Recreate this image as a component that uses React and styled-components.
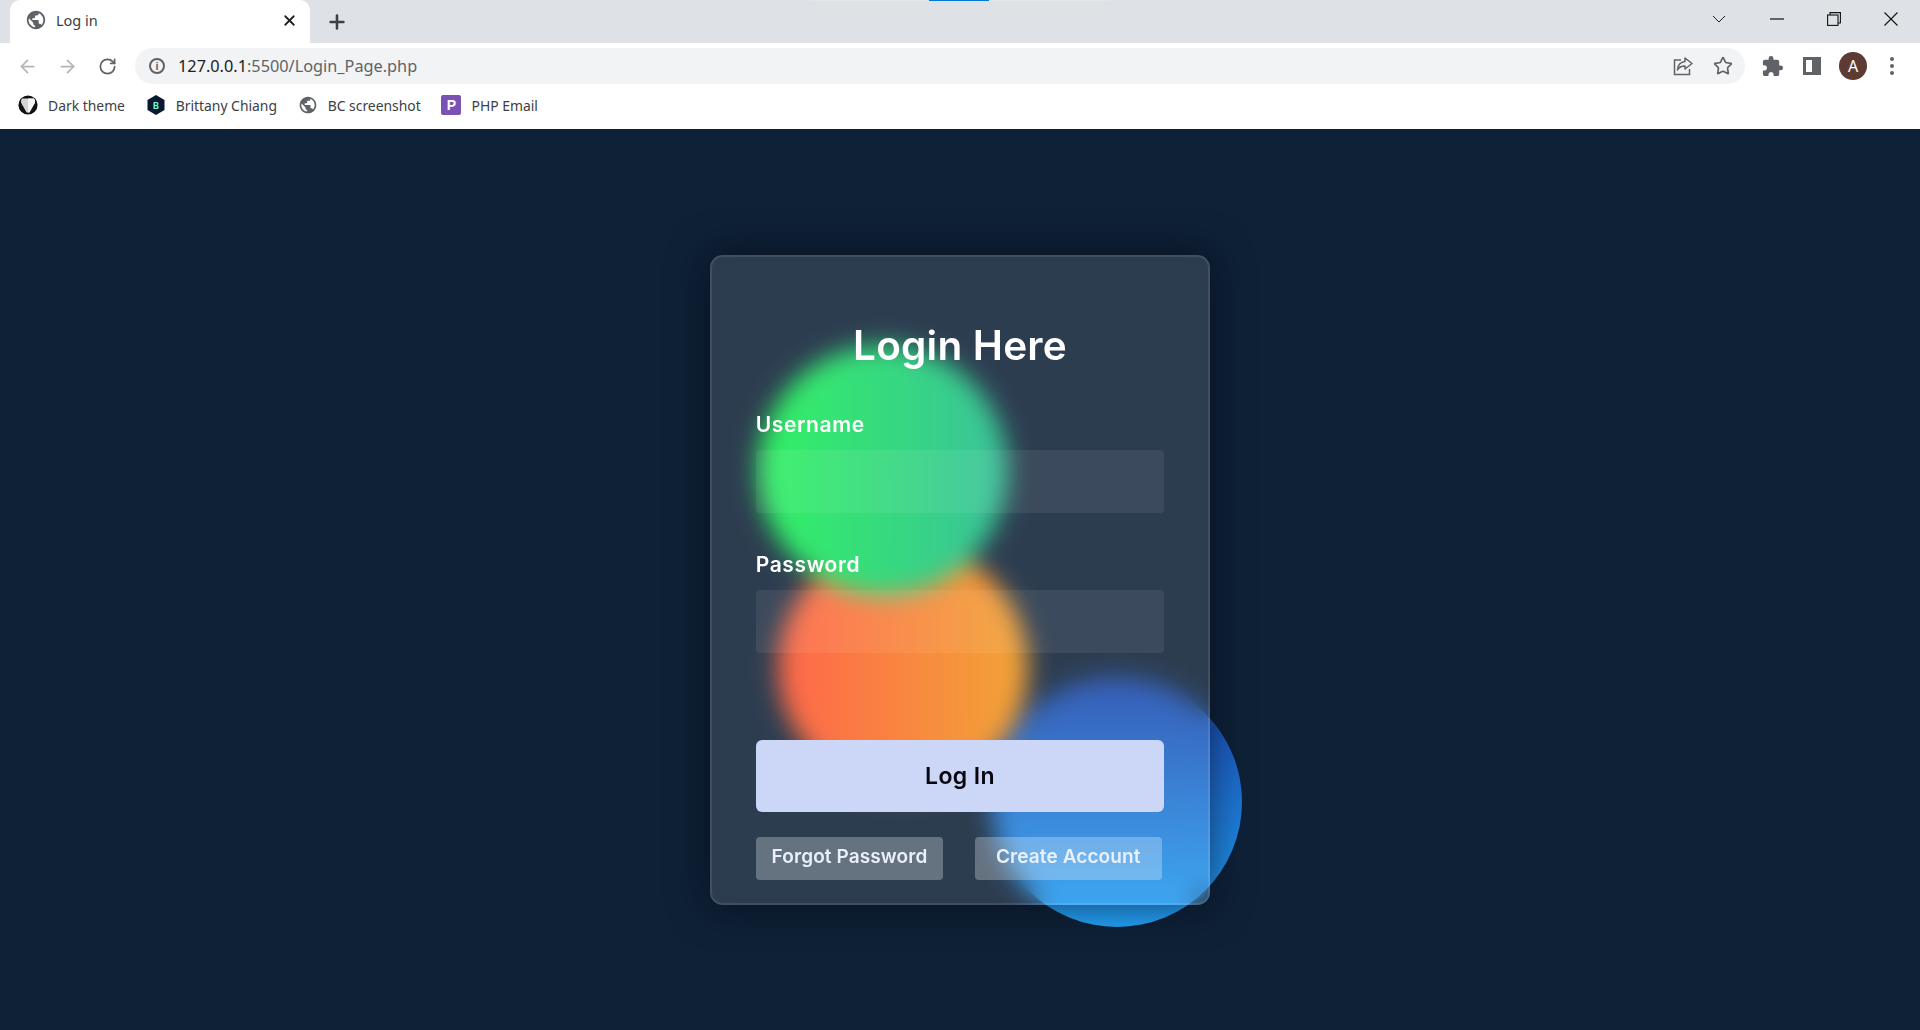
import React from "react";
import styled, { createGlobalStyle } from "styled-components";
import { MdPublic, MdExtension } from "react-icons/md";
import { ArrowLeft, ArrowRight, RotateCw, Star, Plus, X } from "lucide-react";

const GlobalStyle = createGlobalStyle`
  html, body {
    margin: 0;
    padding: 0;
    height: 100%;
    background: #0e2137;
  }
  * {
    box-sizing: border-box;
  }
`;

const CHROME_FONT = `"Noto Sans", "Open Sans", "Liberation Sans", sans-serif`;
const FORM_FONT = `Inter, "Noto Sans", sans-serif`;

function DarkThemeIcon() {
  return (
    <svg width="20" height="20" viewBox="0 0 20 20">
      <circle cx="10" cy="10" r="9.6" fill="#111" />
      <path d="M4 3.4h12c1 1.800 1.200 3 .8 4.500L11.400 17.400H8.600L3.200 7.900C2.800 6.400 3 5.200 4 3.400z" fill="#d4d4d4" />
      <path d="M16 3.400c1 1.800 1.200 3 .8 4.500L11.400 17.400H10V3.400z" fill="#f4f4f4" />
    </svg>
  );
}

function BrittanyIcon() {
  return (
    <svg width="20" height="22" viewBox="0 0 20 22">
      <path d="M10 1l8.500 5v10L10 21l-8.500-5V6z" fill="#0a192f" />
      <text
        x="10"
        y="14.500"
        textAnchor="middle"
        fontSize="9"
        fontWeight="700"
        fontFamily="Inter, sans-serif"
        fill="#64ffda"
      >
        B
      </text>
    </svg>
  );
}

const App = () => {
  const bookmarks = [
    { label: "Dark theme", icon: <DarkThemeIcon /> },
    { label: "Brittany Chiang", icon: <BrittanyIcon /> },
    { label: "BC screenshot", icon: <MdPublic size={22} color="#5f6368" /> },
    { label: "PHP Email", icon: <PhpIcon>P</PhpIcon> },
  ];

  return (
    <Page>
      <GlobalStyle />
      <Browser>
        <TabStrip>
          <DragHint>
            <DragHintActive />
          </DragHint>
          <Tab>
            <MdPublic size={22} color="#5f6368" />
            <TabTitle>Log in</TabTitle>
            <TabClose>
              <X size={17} strokeWidth={2.6} />
            </TabClose>
          </Tab>
          <NewTab>
            <Plus size={22} strokeWidth={2.8} />
          </NewTab>
          <WindowControls>
            <WindowButton $width={42} $gap={8}>
              <svg width="14" height="8" viewBox="0 0 14 8" fill="none" stroke="#222" strokeWidth="1">
                <path d="M1 1l6 6 6-6" />
              </svg>
            </WindowButton>
            <WindowButton>
              <svg width="14" height="2" viewBox="0 0 14 2" fill="none" stroke="#111" strokeWidth="1.2">
                <path d="M0 1h14" />
              </svg>
            </WindowButton>
            <WindowButton>
              <svg width="14" height="14" viewBox="0 0 14 14" fill="none" stroke="#111" strokeWidth="1.1">
                <rect x="0.6" y="3" width="10.4" height="10.4" />
                <path d="M3 3V0.6h10.4V11H11" />
              </svg>
            </WindowButton>
            <WindowButton $width={58}>
              <svg width="14" height="14" viewBox="0 0 14 14" fill="none" stroke="#111" strokeWidth="1.1">
                <path d="M0.5 0.5l13 13M13.5 0.5l-13 13" />
              </svg>
            </WindowButton>
          </WindowControls>
        </TabStrip>
        <Toolbar>
          <NavButton $muted>
            <ArrowLeft size={21} strokeWidth={2} />
          </NavButton>
          <NavButton $muted>
            <ArrowRight size={21} strokeWidth={2} />
          </NavButton>
          <NavButton>
            <RotateCw size={19} strokeWidth={2.2} />
          </NavButton>
          <Omnibox>
            <InfoIcon>i</InfoIcon>
            <Url>
              <b>127.0.0.1</b>:5500/Login_Page.php
            </Url>
            <OmniActions>
              <svg width="20" height="20" viewBox="0 0 20 20" fill="none" stroke="#5f6368" strokeWidth="1.5">
                <path d="M8 4H1.500v14.500h15V13" />
                <path d="M12 2l7 5.500-7 5.500V10c-3.500 0-6 1-7.500 4 .3-5 3-8 7.500-8.500z" strokeLinejoin="round" />
              </svg>
              <Star size={20} strokeWidth={2} color="#5f6368" />
            </OmniActions>
          </Omnibox>
          <ToolIcons>
            <MdExtension size={23} color="#5f6368" />
            <SidePanel />
            <Avatar>A</Avatar>
            <Kebab>
              <i />
              <i />
              <i />
            </Kebab>
          </ToolIcons>
        </Toolbar>
        <BookmarkBar>
          {bookmarks.map((b) => (
            <Bookmark key={b.label}>
              <BookmarkIcon>{b.icon}</BookmarkIcon>
              {b.label}
            </Bookmark>
          ))}
        </BookmarkBar>
      </Browser>
      <Stage>
        <CardWrap>
          <Blob $left={48} $top={90} $z={2} $colors="to right, #14f04c, #1eb98c" />
          <Blob $left={68} $top={287} $z={1} $colors="to right, #ff512f, #f09819" />
          <Blob $left={282} $top={422} $z={1} $colors="#1845ad, #23a2f6" />
          <Card>
            <Title>Login Here</Title>
            <Label htmlFor="username">Username</Label>
            <Field id="username" type="text" />
            <Label htmlFor="password">Password</Label>
            <Field id="password" type="password" />
            <LoginButton type="button">Log In</LoginButton>
            <LinkRow>
              <LinkBox>Forgot Password</LinkBox>
              <LinkBox>Create Account</LinkBox>
            </LinkRow>
          </Card>
        </CardWrap>
      </Stage>
    </Page>
  );
};

const Page = styled.div`
  display: flex;
  flex-direction: column;
  height: 100vh;
  overflow: hidden;
  background: #0e2137;
`;

const Browser = styled.header`
  flex: none;
  height: 129px;
  background: #fff;
  font-family: ${CHROME_FONT};
`;

const TabStrip = styled.div`
  position: relative;
  display: flex;
  align-items: flex-end;
  height: 43px;
  padding-left: 10px;
  background: #dee1e6;
`;

const DragHint = styled.div`
  position: absolute;
  top: 0;
  left: 810px;
  width: 300px;
  height: 1px;
  background: #e6e6e6;
`;

const DragHintActive = styled.div`
  width: 60px;
  height: 1px;
  margin-left: 119px;
  background: #0078d7;
`;

const Tab = styled.div`
  display: flex;
  align-items: center;
  width: 300px;
  height: 43px;
  padding: 0 12px 3px 15px;
  background: #fff;
  border-radius: 10px 10px 0 0;
  color: #3c4043;
`;

const TabTitle = styled.span`
  flex: 1;
  margin-left: 9px;
  font-size: 14.5px;
`;

const TabClose = styled.span`
  display: flex;
  color: #202124;
`;

const NewTab = styled.div`
  display: flex;
  align-items: center;
  justify-content: center;
  width: 34px;
  height: 43px;
  margin-left: 10px;
  color: #3c4043;
`;

const WindowControls = styled.div`
  display: flex;
  align-items: center;
  height: 37px;
  margin-left: auto;
  margin-bottom: 6px;
`;

const WindowButton = styled.div`
  display: flex;
  align-items: center;
  justify-content: center;
  width: ${(p) => p.$width || 57}px;
  height: 100%;
  margin-right: ${(p) => p.$gap || 0}px;
`;

const Toolbar = styled.div`
  display: flex;
  align-items: center;
  height: 44px;
  padding: 2px 0 0 7px;
`;

const NavButton = styled.div`
  display: flex;
  align-items: center;
  justify-content: center;
  width: 40px;
  height: 36px;
  margin-right: ${(p) => (p.$muted ? 0 : 8)}px;
  color: ${(p) => (p.$muted ? "#b3b5b8" : "#5f6368")};
`;

const Omnibox = styled.div`
  display: flex;
  align-items: center;
  width: 1610px;
  height: 36px;
  padding-left: 14px;
  background: #f1f3f4;
  border-radius: 18px;
`;

const InfoIcon = styled.span`
  display: flex;
  align-items: center;
  justify-content: center;
  width: 16px;
  height: 16px;
  border: 2px solid #5f6368;
  border-radius: 50%;
  color: #5f6368;
  font: 700 11px "Liberation Sans", sans-serif;
`;

const Url = styled.span`
  margin-left: 13px;
  font-size: 16.3px;
  color: #5f6368;

  b {
    font-weight: 400;
    color: #202124;
  }
`;

const OmniActions = styled.div`
  display: flex;
  align-items: center;
  gap: 20px;
  margin-left: auto;
  padding-right: 12px;
`;

const ToolIcons = styled.div`
  display: flex;
  align-items: center;
  gap: 18px;
  margin-left: 16px;
`;

const SidePanel = styled.div`
  width: 18px;
  height: 18px;
  margin-left: 1px;
  border: 3px solid #5f6368;
  border-right-width: 9px;
  background: #fff;
`;

const Avatar = styled.div`
  display: flex;
  align-items: center;
  justify-content: center;
  width: 28px;
  height: 28px;
  border-radius: 50%;
  background: #5d3a32;
  color: #fff;
  font-size: 16px;
`;

const Kebab = styled.div`
  display: flex;
  flex-direction: column;
  gap: 3px;
  margin-left: 5px;

  i {
    display: block;
    width: 4px;
    height: 4px;
    border-radius: 50%;
    background: #5f6368;
  }
`;

const BookmarkBar = styled.div`
  display: flex;
  align-items: center;
  gap: 20.7px;
  height: 42px;
  padding: 0 0 6px 18px;
`;

const Bookmark = styled.div`
  display: flex;
  align-items: center;
  gap: 10px;
  font-size: 13.9px;
  color: #3c4043;
`;

const BookmarkIcon = styled.span`
  display: flex;
  align-items: center;
  justify-content: center;
  width: 20px;
  height: 22px;
`;

const PhpIcon = styled.span`
  display: flex;
  align-items: center;
  justify-content: center;
  width: 20px;
  height: 20px;
  border-radius: 2px;
  background: #7952b3;
  color: #fff;
  font: 700 14px "Liberation Sans", sans-serif;
`;

const Stage = styled.main`
  flex: 1;
  display: flex;
  align-items: center;
  justify-content: center;
`;

const CardWrap = styled.div`
  position: relative;
  width: 500px;
  height: 650px;
`;

const Blob = styled.div`
  position: absolute;
  left: ${(p) => p.$left}px;
  top: ${(p) => p.$top}px;
  z-index: ${(p) => p.$z};
  width: 250px;
  height: 250px;
  border-radius: 50%;
  background: linear-gradient(${(p) => p.$colors});
`;

const Card = styled.form`
  position: relative;
  z-index: 3;
  height: 100%;
  padding: 63.5px 43.75px 0;
  background: rgba(255, 255, 255, 0.13);
  border: 2.5px solid rgba(255, 255, 255, 0.1);
  border-radius: 12.5px;
  backdrop-filter: blur(12.5px);
  box-shadow: 0 0 40px rgba(8, 7, 16, 0.6);
  font-family: ${FORM_FONT};
`;

const Title = styled.h3`
  margin: 0;
  font-size: 40.5px;
  font-weight: 600;
  line-height: 52.5px;
  letter-spacing: 0.2px;
  text-align: center;
  color: #fff;
`;

const Label = styled.label`
  display: block;
  margin-top: 37.5px;
  font-size: 21px;
  font-weight: 600;
  line-height: 30px;
  letter-spacing: 0.6px;
  color: #fff;
`;

const Field = styled.input`
  display: block;
  width: 100%;
  height: 62.5px;
  margin-top: 10px;
  padding: 0 12.5px;
  border: none;
  outline: none;
  border-radius: 3.75px;
  background: rgba(255, 255, 255, 0.07);
  color: #fff;
`;

const LoginButton = styled.button`
  display: block;
  width: 100%;
  height: 72px;
  margin-top: 87.5px;
  border: none;
  border-radius: 6px;
  background: #ccd6f6;
  color: #080710;
  font-family: inherit;
  font-size: 23px;
  font-weight: 600;
  letter-spacing: 0.4px;
`;

const LinkRow = styled.div`
  display: flex;
  gap: 31.25px;
  margin-top: 24.5px;
`;

const LinkBox = styled.div`
  width: 187.5px;
  height: 43px;
  padding-top: 4px;
  border-radius: 3.75px;
  background: rgba(255, 255, 255, 0.27);
  color: #eaf0fb;
  font-size: 19px;
  font-weight: 600;
  line-height: 32px;
  letter-spacing: 0.1px;
  text-align: center;
`;

export default App;
